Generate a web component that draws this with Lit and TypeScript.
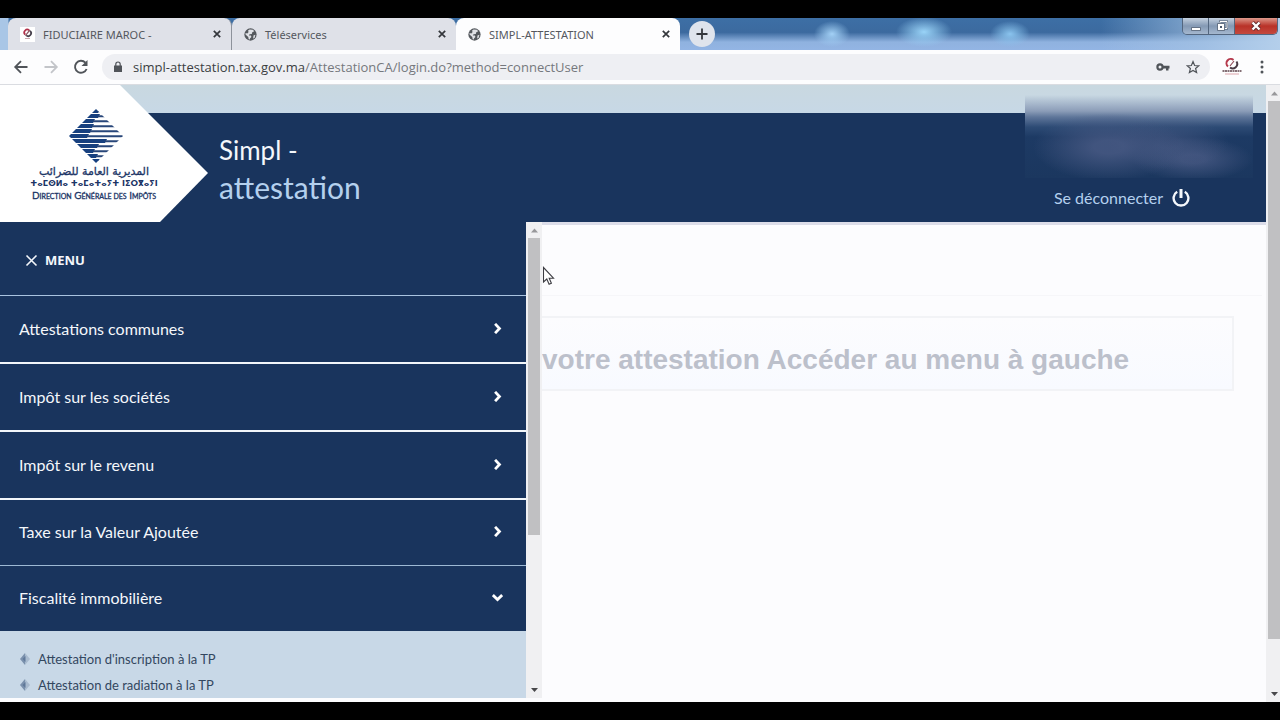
import { LitElement, html, css, svg } from "lit";
import { customElement, property } from "lit/decorators.js";

const globe = html`<svg class="globe" viewBox="0 0 14 14" width="13" height="13" aria-hidden="true">
  <circle cx="7" cy="7" r="6.6" fill="#54585d" />
  <path d="M6 1.6 9.6 1.8 11 3.6 8.9 4.6 8.4 6.4 6 6.6 5.2 8 7.4 8.2 8 9.6 6.6 11 6.3 12.5 5 12.2 4.6 9.8 1.6 7 1.7 5.4 3.6 5.8 5 4.4 4.2 3z" fill="#dfe1e6" />
  <path d="M10.2 8.2 12.3 7.2 11.6 10 9.8 11.6z" fill="#dfe1e6" />
</svg>`;

const brandMark = html`<svg viewBox="0 0 15 15" width="15" height="15" aria-hidden="true">
  <rect width="15" height="15" fill="#fff" />
  <path d="M5.2 7.6a2.8 2.8 0 0 1 4-4.2" fill="none" stroke="#b3304a" stroke-width="1.7" />
  <path d="M6.2 8.4a2.8 2.8 0 0 0 3.8-4.6" fill="none" stroke="#47414c" stroke-width="1.7" />
  <path d="m5.4 8.6 4.4-5.4" stroke="#8a5360" stroke-width="1.2" />
  <path d="M5 11.5h5" stroke="#c9a6ae" stroke-width="1" />
</svg>`;

const cross = html`<svg viewBox="0 0 8 8" width="8" height="8" aria-hidden="true">
  <path d="m.8.8 6.4 6.4M7.2.8.8 7.2" stroke="#34373c" stroke-width="1.7" />
</svg>`;

@customElement("browser-tab")
class BrowserTab extends LitElement {
  @property() label = "";
  @property() icon = "globe";
  @property({ type: Boolean, reflect: true }) active = false;

  static styles = css`
    :host {
      display: flex;
      align-items: center;
      box-sizing: border-box;
      flex: 0 1 224px;
      min-width: 0;
      padding: 0 10px 0 12px;
      background: #dfe1e8;
      border-radius: 8px 8px 0 0;
    }
    :host([active]) {
      background: #fdfdfe;
    }
    button {
      border: 0;
      padding: 0;
      background: none;
      display: flex;
      align-items: center;
      font: 11px "Noto Sans", "Open Sans", sans-serif;
      color: #55585e;
    }
    .title {
      flex: 1;
      gap: 8px;
      min-width: 0;
      white-space: nowrap;
    }
  `;

  render() {
    return html`
      <button class="title" role="tab" aria-selected=${this.active}>
        ${this.icon === "brand" ? brandMark : globe}<span>${this.label}</span>
      </button>
      <button aria-label="Fermer">${cross}</button>
    `;
  }
}

@customElement("scroll-rail")
class ScrollRail extends LitElement {
  @property({ type: Number }) size = 60;

  static styles = css`
    :host {
      display: flex;
      flex-direction: column;
      box-sizing: border-box;
      background: #f0f0f2;
      padding: 0 2px 0 2px;
    }
    svg {
      flex: none;
      align-self: center;
    }
    .track {
      flex: 1;
    }
    .thumb {
      background: #c0c0c2;
    }
  `;

  render() {
    return html`
      <svg viewBox="0 0 9 16" width="9" height="16"><path d="M1 10.5h7L4.500 6.500z" fill="#98989b" /></svg>
      <div class="track"><div class="thumb" style="height:${this.size}%"></div></div>
      <svg viewBox="0 0 9 16" width="9" height="16"><path d="M1 6h7L4.500 10z" fill="#47474a" /></svg>
    `;
  }
}

// Where the thick half of each stripe gives way to the thin one.
const stripes = [29, 29, 24, 23, 21, 18, 36, 28, 24, 27, 29];

@customElement("tax-logo")
class TaxLogo extends LitElement {
  static styles = css`
    :host {
      display: flex;
      flex-direction: column;
      align-items: center;
      box-sizing: border-box;
      width: 208px;
      height: 137px;
      padding: 24px 20px 0 0;
      background: #fff;
      clip-path: polygon(0 0, 120px 0, 208px 88px, 160px 100%, 0 100%);
      color: #1c3566;
      white-space: nowrap;
    }
    .mark {
      margin-left: 3px;
    }
    .arabic {
      font: 11px/12px "DejaVu Sans", sans-serif;
      margin-top: 3px;
      -webkit-text-stroke: 0.3px #1c3566;
    }
    .tifinagh {
      font: bold 8px/12px "DejaVu Sans", sans-serif;
    }
    .french {
      font: 10px/10px Lato, sans-serif;
      -webkit-text-stroke: 0.3px #1c3566;
    }
    .small {
      font-size: 7px;
      text-transform: uppercase;
    }
  `;

  render() {
    return html`
      <svg class="mark" viewBox="0 0 54 54" width="54" height="54" aria-hidden="true">
        <clipPath id="diamond"><path d="M27 0 54 27 27 54 0 27z" /></clipPath>
        <g clip-path="url(#diamond)">
          ${stripes.map((mid, i) => {
            const y = i * 5;
            return svg`
              <path d="M0 ${y}H${mid + 2}L${mid} ${y + 4}H0z" fill="#17407f" />
              <path d="M${mid} ${y + 1.2}H54V${y + 3.2}H${mid}z" fill="#284679" />`;
          })}
        </g>
      </svg>
      <span class="arabic" lang="ar" dir="rtl">المديرية العامة للضرائب</span>
      <span class="tifinagh" lang="zgh">ⵜⴰⵎⵙⵍⴰ ⵜⴰⵎⴰⵜⴰⵢⵜ ⵏⵉⵔⴳⴰⵢⵏ</span>
      <span class="french">D<span class="small">irection</span> G<span class="small">énérale des</span> I<span class="small">mpôts</span></span>
    `;
  }
}

const sections = [
  { label: "Attestations communes", open: false },
  { label: "Impôt sur les sociétés", open: false },
  { label: "Impôt sur le revenu", open: false },
  { label: "Taxe sur la Valeur Ajoutée", open: false },
  { label: "Fiscalité immobilière", open: true },
];
const links = ["Attestation d'inscription à la TP", "Attestation de radiation à la TP"];

@customElement("side-menu")
class SideMenu extends LitElement {
  static styles = css`
    :host {
      display: flex;
      min-height: 0;
      overflow: hidden;
      background: #fcfcfe;
    }
    nav {
      flex: 1;
      min-width: 0;
      overflow: hidden;
      background: #c8d8e7;
      margin-bottom: 4px;
      font-family: Lato, sans-serif;
    }
    scroll-rail {
      width: 16px;
      margin-bottom: 4px;
    }
    button {
      display: flex;
      align-items: center;
      box-sizing: border-box;
      width: 100%;
      border: 0;
      background: #19345d;
      color: #f4f7fb;
      font: 16px Lato, sans-serif;
      text-align: left;
    }
    .close {
      height: 74px;
      gap: 7px;
      padding: 3px 0 0 25px;
      border-bottom: 1px solid #a9c3e0;
      font: bold 13px "Open Sans", sans-serif;
    }
    .section {
      height: 68px;
      padding: 0 23px 2px 19px;
      justify-content: space-between;
      border-bottom: 2px solid #f2f6fa;
    }
    .section.last {
      height: 66px;
      border-bottom: 1px solid #9db9d4;
    }
    .section.open {
      height: 65px;
      border-bottom: 0;
    }
    ul {
      list-style: none;
      margin: 0;
      padding: 15px 0 0 20px;
    }
    li {
      display: flex;
      align-items: center;
      gap: 8px;
      height: 26px;
    }
    a {
      color: #33475f;
      text-decoration: none;
      font-size: 13px;
    }
  `;

  render() {
    return html`
      <nav>
        <button class="close">
          <svg viewBox="0 0 13 13" width="13" height="13" aria-hidden="true"><path d="m1.500 1.500 10 10m0-10-10 10" stroke="#f4f7fb" stroke-width="1.600" /></svg>
          <span>MENU</span>
        </button>
        ${sections.map(
          (s, i) => html`<button class="section ${s.open ? "open" : ""} ${i === 3 ? "last" : ""}" aria-expanded=${s.open}>
            <span>${s.label}</span>
            <svg viewBox="0 0 10 10" width="11" height="11" aria-hidden="true">
              <path d=${s.open ? "m.8 2.800 4.200 4 4.200-4" : "m2.800.8 4 4.200-4 4.200"} fill="none" stroke="#fff" stroke-width="2.500" />
            </svg>
          </button>`
        )}
        <ul>
          ${links.map(
            (l) => html`<li>
              <svg viewBox="0 0 10 12" width="10" height="12" aria-hidden="true"><path d="M5 0 0 6l5 6z" fill="#7b91ad" /><path d="m5 0 5 6-5 6z" fill="#a9bbcf" /><path d="m2.500 6 3-3v6z" fill="#5f7899" /></svg>
              <a href="#">${l}</a>
            </li>`
          )}
        </ul>
      </nav>
      <scroll-rail size="67"></scroll-rail>
    `;
  }
}

@customElement("app-root")
class AppRoot extends LitElement {
  static styles = css`
    :host {
      display: flex;
      flex-direction: column;
      box-sizing: border-box;
      height: 100vh;
      padding: 18px 0;
      background: #000;
      overflow: hidden;
      font-family: Lato, sans-serif;
    }
    button {
      border: 0;
      padding: 0;
      background: none;
      display: flex;
      align-items: center;
      justify-content: center;
    }
    .titlebar {
      display: flex;
      flex: none;
      height: 32px;
      padding-left: 8px;
      background:
        radial-gradient(ellipse 18px 13px at 832px 16px, #a3d1f6, transparent),
        radial-gradient(ellipse 28px 15px at 924px 14px, #9ad4f8, transparent),
        radial-gradient(ellipse 20px 13px at 1010px 16px, #8ac4ee, transparent),
        linear-gradient(90deg, #a9c6e6 0, #a9c6e6 8px, transparent 9px, transparent 86%, #a7c5e5aa 94%, #b4cfeb 100%),
        linear-gradient(#3d6fa5 0, #3c6a9f 45%, #8fb2df 75%, #93b5e4 100%);
    }
    .tabs {
      display: flex;
      flex: 0 1 673px;
      min-width: 0;
    }
    .divided {
      border-right: 1px solid #8d929b;
      border-radius: 8px 8px 0 0;
    }
    .new-tab {
      width: 26px;
      height: 26px;
      margin: 3px 0 0 8px;
      border-radius: 50%;
      background: #dfe4ec;
    }
    .controls {
      display: flex;
      margin: 0 2px 0 auto;
      height: 17px;
      border: 1px solid #53667f;
      border-top: 0;
      border-radius: 0 0 5px 5px;
      box-sizing: border-box;
      overflow: hidden;
    }
    .controls button {
      width: 26px;
      background: linear-gradient(#c3d0df, #8499b4 50%, #a5b8cf);
      border-right: 1px solid #53667f;
    }
    .controls .quit {
      width: 42px;
      border: 0;
      background: linear-gradient(#dd988a, #b93228 50%, #c4493e);
    }
    .toolbar {
      display: flex;
      align-items: center;
      flex: none;
      box-sizing: border-box;
      height: 35px;
      padding: 0 15px 0 12px;
      background: #fdfdfe;
      border-bottom: 1px solid #dadce1;
    }
    .toolbar button {
      width: 18px;
      height: 18px;
      margin-right: 12px;
    }
    .address {
      display: flex;
      align-items: center;
      flex: 1;
      min-width: 0;
      height: 26px;
      margin: 0 12px 0 0;
      padding: 0 0 0 12px;
      border-radius: 13px;
      background: #eeeff3;
    }
    .address button:last-child {
      margin-right: 8px;
    }
    .url {
      flex: 1;
      margin-left: 11px;
      color: #75787d;
      font: 13px "Open Sans", "Noto Sans", sans-serif;
      white-space: nowrap;
    }
    .host {
      color: #3b3e42;
    }
    .toolbar .more {
      width: 6px;
      margin: 0 0 0 17px;
    }
    .viewport {
      display: flex;
      flex: 1;
      min-height: 0;
    }
    .page-rail {
      width: 14px;
      padding-right: 0;
    }
    .page {
      display: flex;
      flex-direction: column;
      flex: 1;
      min-width: 0;
      background: #fcfcfe;
    }
    header {
      position: relative;
      display: flex;
      flex: none;
      height: 137px;
      background: linear-gradient(#c9d8e0 0, #c7d8e6 28px, #19345d 28px);
    }
    h1 {
      flex: 1;
      margin: 0;
      padding: 46px 0 0 11px;
      color: #f4f7fb;
      font: 26px/38px Lato, sans-serif;
    }
    .sub {
      display: block;
      color: #b4d0ee;
      font-size: 30px;
      line-height: 36px;
    }
    .account {
      position: absolute;
      right: 13px;
      top: 10px;
      width: 228px;
      height: 83px;
      background:
        radial-gradient(ellipse 76px 34px at 84px 52px, #4a5b85cc 20%, transparent),
        radial-gradient(ellipse 60px 26px at 144px 48px, #4a5b8588 20%, transparent),
        radial-gradient(ellipse 60px 22px at 168px 64px, #4a5b85bb 20%, transparent),
        linear-gradient(#c7d8e600 0, #8c9db8 16px, #5f769a 22px, #2d4b75 32px, #1d3a64 42px, #1b375f);
    }
    .logout {
      display: flex;
      align-items: center;
      gap: 9px;
      align-self: flex-end;
      margin: 0 76px 14px 0;
      color: #b4d0ee;
      font-size: 16px;
      line-height: 20px;
      text-decoration: none;
    }
    .body {
      display: grid;
      grid-template-columns: minmax(0, 542fr) minmax(0, 724fr);
      flex: 1;
      min-height: 0;
    }
    main {
      padding-right: 32px;
      border-top: 3px solid #dcdde9;
      background: #fcfcfe;
    }
    .crumbs {
      height: 70px;
      border-bottom: 1px solid #f6f6f9;
      margin-right: -28px;
    }
    .banner {
      margin: 20px 0 0;
      padding: 28px 0 15px;
      border: 2px solid #f2f3f6;
      border-left: 0;
      background: linear-gradient(#fcfcfe, #f8faff);
      color: #bcc0cb;
      font: bold 28px/28px "Liberation Sans", sans-serif;
      white-space: nowrap;
      overflow: hidden;
    }
    .pointer {
      position: absolute;
      left: 542px;
      top: 266px;
    }
  `;

  render() {
    return html`
      <div class="titlebar">
        <div class="tabs" role="tablist">
          <browser-tab class="divided" icon="brand" label="FIDUCIAIRE MAROC -"></browser-tab>
          <browser-tab label="Téléservices"></browser-tab>
          <browser-tab active label="SIMPL-ATTESTATION"></browser-tab>
        </div>
        <button class="new-tab" aria-label="Nouvel onglet">
          <svg viewBox="0 0 12 12" width="12" height="12"><path d="M6 .5v11M.5 6h11" stroke="#34373c" stroke-width="1.800" /></svg>
        </button>
        <div class="controls">
          <button aria-label="Réduire"><svg viewBox="0 0 12 12" width="12" height="12"><path d="M1.500 7.500h9v3h-9z" fill="#fff" stroke="#4b5a70" stroke-width=".8" /></svg></button>
          <button aria-label="Restaurer"><svg viewBox="0 0 12 12" width="12" height="12"><path d="M4 1.500h7v7H4z" fill="none" stroke="#4b5a70" stroke-width="2" /><path d="M4 1.500h7v7H4z" fill="none" stroke="#fff" /><path d="M1.500 3.500h7v7h-7z" fill="#fff" stroke="#4b5a70" stroke-width=".8" /><path d="M4 6h2v2H4z" fill="#4b5a70" /></svg></button>
          <button class="quit" aria-label="Quitter"><svg viewBox="0 0 12 10" width="12" height="10"><path d="m2.500 1.500 7 7m0-7-7 7" stroke="#5e2a2c" stroke-width="4" /><path d="m2.500 1.500 7 7m0-7-7 7" stroke="#fff" stroke-width="2.400" /></svg></button>
        </div>
      </div>

      <div class="toolbar">
        <button aria-label="Précédent"><svg viewBox="0 0 16 16" width="16" height="16"><path d="M14.500 8H2.500M8 2.200 2.200 8 8 13.800" fill="none" stroke="#505459" stroke-width="1.800" /></svg></button>
        <button aria-label="Suivant"><svg viewBox="0 0 16 16" width="16" height="16"><path d="M1.500 8h12M8 2.200 13.800 8 8 13.800" fill="none" stroke="#c3c5c9" stroke-width="1.800" /></svg></button>
        <button aria-label="Actualiser"><svg viewBox="0 0 16 16" width="16" height="16"><path d="M13.600 10A6 6 0 1 1 12.400 3.700" fill="none" stroke="#505459" stroke-width="1.900" /><path d="M14.500 1v6h-6z" fill="#505459" /></svg></button>
        <div class="address">
          <svg viewBox="0 0 8 12" width="8" height="12" aria-hidden="true"><path d="M0 4.500h8V11H0z" fill="#505459" /><path d="M1.800 5V3.200a2.200 2.200 0 0 1 4.400 0V5" fill="none" stroke="#505459" stroke-width="1.200" /></svg>
          <span class="url"><span class="host">simpl-attestation.tax.gov.ma</span>/AttestationCA/login.do?method=connectUser</span>
          <button aria-label="Mot de passe"><svg viewBox="0 0 14 8" width="14" height="8"><circle cx="4" cy="4" r="2.600" fill="none" stroke="#505459" stroke-width="2.200" /><path d="M6.500 2.800h7v2.600h-1V7.500h-2.500V5.400H6.500z" fill="#505459" /></svg></button>
          <button aria-label="Favori"><svg viewBox="0 0 14 14" width="14" height="14"><path d="m7 1.600 1.600 3.900 4.200.3L9.600 8.500l1 4.100L7 10.400l-3.600 2.200 1-4.100L1.200 5.800l4.200-.3z" fill="none" stroke="#505459" stroke-width="1.200" /></svg></button>
        </div>
        <svg viewBox="0 0 20 18" width="20" height="18" aria-hidden="true"><path d="M6 8.500A4 4 0 0 1 11.500 2" fill="none" stroke="#b5394c" stroke-width="2" /><path d="M14.500 3.500A4.500 4.500 0 0 1 8 9.500" fill="none" stroke="#4a3a45" stroke-width="2" /><path d="m8 8 4-5" stroke="#8f4856" stroke-width="1.200" /><path d="M.5 13h19" stroke="#5c4048" stroke-width="1.500" stroke-dasharray="2 .500" /><path d="M3 16h14" stroke="#dca5ab" stroke-width="1" /></svg>
        <button class="more" aria-label="Plus"><svg viewBox="0 0 4 14" width="4" height="14"><g fill="#505459"><circle cx="2" cy="2" r="1.500" /><circle cx="2" cy="7" r="1.500" /><circle cx="2" cy="12" r="1.500" /></g></svg></button>
      </div>

      <div class="viewport">
        <div class="page">
          <header>
            <tax-logo></tax-logo>
            <h1>Simpl -<span class="sub">attestation</span></h1>
            <div class="account"></div>
            <a class="logout" href="#">Se déconnecter
              <svg viewBox="0 0 18 18" width="18" height="18" aria-hidden="true"><path d="M5.200 2.800a7.400 7.400 0 1 0 7.600 0" fill="none" stroke="#f4f7fb" stroke-width="2.400" /><path d="M9 0v9" stroke="#f4f7fb" stroke-width="3" /></svg>
            </a>
          </header>
          <div class="body">
            <side-menu></side-menu>
            <main>
              <div class="crumbs"></div>
              <p class="banner">votre attestation Accéder au menu à gauche</p>
            </main>
          </div>
        </div>
        <scroll-rail class="page-rail" size="92"></scroll-rail>
      </div>

      <svg class="pointer" viewBox="0 0 13 20" width="13" height="20" aria-hidden="true"><path d="M1.500 1.500v14.500l3.300-3 2.300 5.300 2.300-1-2.200-5.100h4.300z" fill="#fff" stroke="#3c3c42" stroke-width="1.100" /></svg>
    `;
  }
}
